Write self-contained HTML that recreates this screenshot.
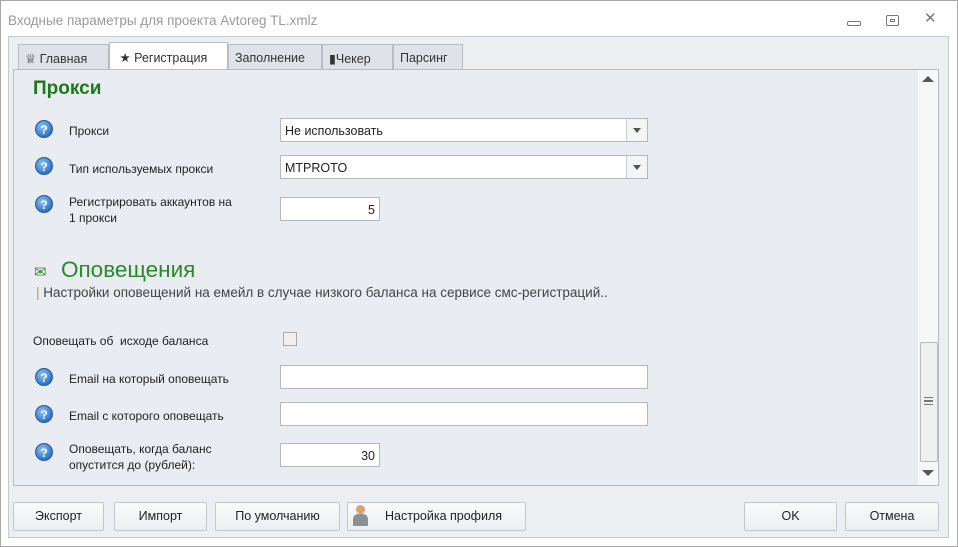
<!DOCTYPE html>
<html><head><meta charset="utf-8"><style>
*{margin:0;padding:0;box-sizing:border-box}
body{width:958px;height:547px;background:#fff;font-family:"Liberation Sans",sans-serif;font-size:12px;color:#222;position:relative;overflow:hidden}
.a{position:absolute}
.win{left:0;top:0;width:958px;height:547px;border:1px solid #a9a9a9;background:#fff}
.title{left:8px;top:13px;color:#9a9a9a;font-size:13.5px}
.frame{left:8px;top:36px;width:941px;height:502px;background:#eceef1;border:1px solid #c6c9ce}
.tab{top:44px;height:25px;background:#dfe2e6;border:1px solid #b8bcc2;border-bottom:none;font-size:12.5px;color:#333;padding:6px 0 0 6px}
.tab.act{background:#fff;top:42px;height:28px;padding-top:7px}
.content{left:13px;top:69px;width:926px;height:417px;background:#e9ecf0;border:1px solid #b8bcc2}
.q{width:18px;height:18px;border-radius:50%;background:radial-gradient(circle at 40% 35%,#8fc3f3,#2f74c8 70%,#1d56a0);color:#fff;font-weight:bold;font-size:12px;text-align:center;line-height:18px;border:1px solid #2a5d9c}
.lbl{font-size:12px;color:#222}
.inp{background:#fff;border:1px solid #b5b9bf;height:24px;font-size:12.5px;padding:5px 4px}
.dd{position:absolute;right:0;top:0;width:21px;height:22px;border-left:1px solid #c9ccd1;background:#f4f5f7}
.dd:after{content:"";position:absolute;left:6px;top:9px;border:4px solid transparent;border-top:5px solid #555}
.btn{top:502px;height:29px;background:linear-gradient(#fafafa,#eceef0);border:1px solid #c3c6ca;border-radius:2px;font-size:12.5px;color:#222;text-align:center;line-height:27px}
</style></head><body>
<div class="a win"></div>
<div class="a title">Входные параметры для проекта Avtoreg TL.xmlz</div>
<div class="a" style="left:847px;top:21px;width:14px;height:5px;border:1px solid #777;border-radius:2px"></div>
<div class="a" style="left:886px;top:15px;width:13px;height:11px;border:1px solid #777;border-radius:2px"><div class="a" style="left:3px;top:3px;width:5px;height:3px;border:1px solid #777"></div></div>
<div class="a" style="left:924px;top:9px;font-size:15px;color:#777">✕</div>
<div class="a frame"></div>
<div class="a tab" style="left:18px;width:91px">♕ Главная</div>
<div class="a tab act" style="left:109px;width:119px">&nbsp;★ Регистрация</div>
<div class="a tab" style="left:228px;width:94px">Заполнение</div>
<div class="a tab" style="left:322px;width:71px">▮Чекер</div>
<div class="a tab" style="left:393px;width:70px">Парсинг</div>
<div class="a content"></div>
<div class="a" style="left:918px;top:70px;width:20px;height:415px;background:#f6f7f8"></div>
<div class="a" style="left:922px;top:76px;border:6px solid transparent;border-bottom:6px solid #555;border-top:none;width:0"></div>
<div class="a" style="left:920px;top:342px;width:18px;height:120px;background:#eef0f2;border:1px solid #b6b9be;border-radius:2px"></div>
<div class="a" style="left:924px;top:397px;width:9px;height:8px;border-top:1px solid #777;border-bottom:1px solid #777"><div style="border-top:1px solid #777;margin-top:2px;height:2px;border-bottom:1px solid #777"></div></div>
<div class="a" style="left:922px;top:470px;border:6px solid transparent;border-top:6px solid #555;border-bottom:none;width:0"></div>

<div class="a" style="left:33px;top:78px;font-size:19px;font-weight:bold;color:#1c7a1c">Прокси</div>

<div class="a q" style="left:35px;top:120px">?</div>
<div class="a lbl" style="left:69px;top:124px">Прокси</div>
<div class="a inp" style="left:280px;top:118px;width:368px">Не использовать<div class="dd"></div></div>

<div class="a q" style="left:35px;top:157px">?</div>
<div class="a lbl" style="left:69px;top:162px">Тип используемых прокси</div>
<div class="a inp" style="left:280px;top:155px;width:368px">MTPROTO<div class="dd"></div></div>

<div class="a q" style="left:35px;top:195px">?</div>
<div class="a lbl" style="left:69px;top:194px;line-height:16px">Регистрировать аккаунтов на<br>1 прокси</div>
<div class="a inp" style="left:280px;top:197px;width:100px;text-align:right">5</div>

<div class="a" style="left:34px;top:263px;font-size:15px;color:#3a8a3a">✉</div>
<div class="a" style="left:61px;top:257px;font-size:22.5px;color:#2a8a2a">Оповещения</div>
<div class="a" style="left:36px;top:285px;font-size:13.5px;color:#444"><span style="color:#b0a060">|</span> Настройки оповещений на емейл в случае низкого баланса на сервисе смс-регистраций..</div>

<div class="a lbl" style="left:33px;top:334px">Оповещать об&nbsp; исходе баланса</div>
<div class="a" style="left:283px;top:332px;width:14px;height:14px;border:1px solid #aaa;background:#f0f0f0"></div>

<div class="a q" style="left:35px;top:368px">?</div>
<div class="a lbl" style="left:69px;top:372px">Email на который оповещать</div>
<div class="a inp" style="left:280px;top:365px;width:368px"></div>

<div class="a q" style="left:35px;top:405px">?</div>
<div class="a lbl" style="left:69px;top:409px">Email с которого оповещать</div>
<div class="a inp" style="left:280px;top:402px;width:368px"></div>

<div class="a q" style="left:35px;top:443px">?</div>
<div class="a lbl" style="left:69px;top:441px;line-height:16px">Оповещать, когда баланс<br>опустится до (рублей):</div>
<div class="a inp" style="left:280px;top:443px;width:100px;text-align:right">30</div>

<div class="a btn" style="left:13px;width:91px">Экспорт</div>
<div class="a btn" style="left:114px;width:93px">Импорт</div>
<div class="a btn" style="left:215px;width:125px">По умолчанию</div>
<div class="a btn" style="left:347px;width:179px;text-align:left;padding-left:37px">Настройка профиля</div>
<div class="a" style="left:356px;top:505px;width:9px;height:9px;border-radius:50%;background:#d9a070"></div>
<div class="a" style="left:353px;top:514px;width:15px;height:12px;border-radius:5px 5px 1px 1px;background:#8a9098"></div>
<div class="a btn" style="left:744px;width:93px">OK</div>
<div class="a btn" style="left:845px;width:94px">Отмена</div>
</body></html>
